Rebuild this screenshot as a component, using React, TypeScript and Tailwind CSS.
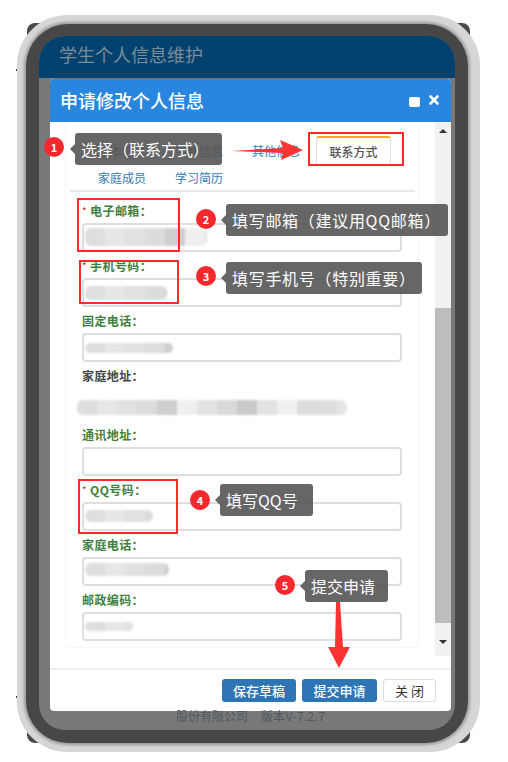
import React from 'react';
import { X } from 'lucide-react';

const font = { fontFamily: '"Noto Sans CJK SC", "Liberation Sans", sans-serif' };

const shades = ['#efefef', '#dedede', '#d9d9d9', '#e1e1e1', '#e3e3e3', '#cfcfcf', '#dcdcdc', '#e2e2e2', '#e6e6e6', '#c9c9c9', '#dcdcdc', '#f0f0f0'];

function Smudge({ width, height, left = 0, top = 0 }: { width: number; height: number; left?: number; top?: number }) {
  // mosaic over personal data in the original screenshot
  const count = Math.ceil(width / 20);
  return (
    <div
      className="absolute flex overflow-hidden rounded-[6px] blur-[1px]"
      style={{ width, height, left, top }}
    >
      {Array.from({ length: count }, (_, i) => (
        <span key={i} className="h-full w-[20px] shrink-0" style={{ background: shades[(i * 7 + 1) % shades.length] }} />
      ))}
    </div>
  );
}

function Label({ children, dark }: { children: React.ReactNode; dark?: boolean }) {
  return (
    <div className={`h-[26px] pt-[1px] flex items-center text-[12px] font-bold leading-none tracking-[0.4px] ${dark ? 'text-[#444]' : 'text-[#3f7f3f]'}`}>
      {children}
    </div>
  );
}

function Field({ label, required, value }: {
  label: string;
  required?: boolean;
  value?: { width: number; height: number; top: number };
}) {
  return (
    <div>
      <Label>
        {required && <span className="text-[#c9302c] text-[10px] font-normal mr-[3px]">*</span>}
        {label}
      </Label>
      <div className="relative h-[29px] w-[320px] bg-white border-2 border-[#dedede] rounded-[4px]">
        {value && <Smudge left={1} top={value.top} width={value.width} height={value.height} />}
      </div>
    </div>
  );
}

function Badge({ n, x, y }: { n: number; x: number; y: number }) {
  return (
    <div
      className="absolute w-5 h-5 rounded-full bg-[#f5282d] text-white text-[11px] font-bold flex items-center justify-center"
      style={{ left: x - 10, top: y - 10 }}
    >
      {n}
    </div>
  );
}

function Tip({ text, x, y, w, wide }: { text: string; x: number; y: number; w: number; wide?: boolean }) {
  return (
    <div
      className={`absolute h-[32px] bg-[#555555]/90 rounded-[3px] text-white text-[16px] flex items-center pl-[6px] whitespace-nowrap ${wide ? 'tracking-[0.7px]' : ''}`}
      style={{ left: x, top: y, width: w }}
    >
      <span className="absolute left-[-5px] top-[11px] w-0 h-0 border-y-[5px] border-y-transparent border-r-[5px] border-r-[#666666]" />
      {text}
    </div>
  );
}

function RedBox({ x, y, w, h }: { x: number; y: number; w: number; h: number }) {
  return (
    <div
      className="absolute border-[2px] border-[#ff2b2b]"
      style={{ left: x, top: y, width: w, height: h }}
    />
  );
}

export default function App() {
  return (
    <div className="relative w-[508px] h-[762px] bg-white overflow-hidden pt-[15px] pl-[17px]" style={font}>
      {/* side buttons of the phone frame */}
      <div className="absolute left-[16px] top-[69px] w-[12px] h-[2px] bg-[#3c3c3c]" />
      <div className="absolute left-[468px] top-[69px] w-[12px] h-[2px] bg-[#3c3c3c]" />
      <div className="absolute left-[16px] top-[696px] w-[12px] h-[2px] bg-[#3c3c3c]" />
      <div className="absolute left-[468px] top-[696px] w-[12px] h-[2px] bg-[#3c3c3c]" />
      <div className="absolute left-[27px] top-[23px] w-[14px] h-[14px] rounded-tl-[8px] bg-[#4a4a4a]" />
      <div className="absolute left-[456px] top-[23px] w-[14px] h-[14px] rounded-tr-[8px] bg-[#4a4a4a]" />
      <div className="absolute left-[27px] top-[730px] w-[14px] h-[13px] rounded-bl-[8px] bg-[#4a4a4a]" />
      <div className="absolute left-[456px] top-[730px] w-[14px] h-[13px] rounded-br-[8px] bg-[#4a4a4a]" />

      <div className="relative w-[463px] h-[737px] rounded-[50px] bg-[#d6d6d6] pt-[9px] pb-[9px] pl-[9px] pr-[12px]">
        <div className="h-full rounded-[42px] bg-[#474747] shadow-[0_0_3px_2px_#9a9a9a] pt-[12px] pb-[13px] px-[13px]">
          <div className="h-full rounded-[26px] overflow-hidden bg-[#787878] flex flex-col">
            <div className="h-[42px] shrink-0 bg-[#03426f] px-[20px] pb-[6px] flex items-center text-[18px] text-[#7a8c99]">
              学生个人信息维护
            </div>

            {/* modal */}
            <div className="ml-[11px] mr-[4px] mt-px h-[632px] shrink-0 bg-white rounded-[4px] flex flex-col overflow-hidden">
              <div className="h-[43px] shrink-0 bg-[#2886de] pl-[10px] pr-[10px] flex items-center justify-between text-white">
                <span className="text-[18px] font-medium">申请修改个人信息</span>
                <div className="flex items-center gap-[7px]">
                  <span className="w-[11px] h-[10px] mt-[2px] bg-white rounded-[2px]" />
                  <X size={14} strokeWidth={4.5} className="-mt-[2px]" />
                </div>
              </div>

              <div className="h-[534px] shrink-0 flex">
                <div className="w-[385px] pl-[15px] pr-[16px]">
                  <div className="h-[526px] border border-t-0 border-[#f6f6f6] rounded-b-[4px] pl-[16px]">
                    <div className="-ml-[12px] w-[345px] h-[70px] border-b-2 border-[#e8e8e8] pt-[14px] text-[12px] text-[#337ab7]">
                      <div className="h-[29px] flex items-center relative">
                        <span className="ml-[28px] w-[77px]">基本信息</span>
                        <span className="w-[77px]">学籍信息</span>
                        <span className="w-[64px]">其他信息</span>
                        <div className="w-[75px] h-[29px] bg-white border border-b-0 border-[#ddd] border-t-2 border-t-[#f5a623] rounded-t-[3px] flex items-center justify-center font-medium text-[#555]">
                          联系方式
                        </div>
                      </div>
                      <div className="flex pt-[4px] pl-[28px] gap-[29px]">
                        <span>家庭成员</span>
                        <span>学习简历</span>
                      </div>
                    </div>

                    <div className="pt-[5px]">
                      <Field label="电子邮箱：" required value={{ width: 122, height: 18, top: 3 }} />
                      <Field label="手机号码：" required value={{ width: 82, height: 14, top: 6 }} />
                      <Field label="固定电话：" value={{ width: 88, height: 10, top: 8 }} />
                      <Label dark>家庭地址：</Label>
                      <div className="relative h-[33px]">
                        <Smudge left={-5} top={12} width={270} height={15} />
                      </div>
                      <Field label="通讯地址：" />
                      <Field label="QQ号码：" required value={{ width: 68, height: 12, top: 6 }} />
                      <Field label="家庭电话：" value={{ width: 84, height: 13, top: 4 }} />
                      <Field label="邮政编码：" value={{ width: 48, height: 9, top: 8 }} />
                    </div>
                  </div>
                </div>

                {/* scrollbar */}
                <div className="w-[16px] bg-[#f1f1f1] flex flex-col items-center">
                  <div className="h-[186px] w-full flex justify-center pt-[7px]">
                    <span className="w-0 h-0 border-x-[4px] border-x-transparent border-b-[4px] border-b-[#333]" />
                  </div>
                  <div className="h-[315px] w-full bg-[#bdbdbd]" />
                  <div className="flex-1 w-full flex justify-center items-center pt-[4px]">
                    <span className="w-0 h-0 border-x-[4px] border-x-transparent border-t-[4px] border-t-[#333]" />
                  </div>
                </div>
              </div>

              <div className="mt-[12px] flex-1 border-t-2 border-[#eeeeee] flex justify-end pt-[9px] pr-[15px] gap-[6px] text-[13px]">
                <button className="w-[74px] h-[23px] bg-[#2e75b5] rounded-[3px] text-white font-medium">保存草稿</button>
                <button className="w-[75px] h-[23px] bg-[#2e75b5] rounded-[3px] text-white font-medium">提交申请</button>
                <button className="w-[53px] h-[23px] bg-white border border-[#ddd] rounded-[3px] text-[#333]">关 闭</button>
              </div>
            </div>

            <div className="flex gap-[13px] pl-[137px] -mt-[3px] pt-px text-[12px] text-[#4f5861] leading-[14px]">
              <span>股份有限公司</span>
              <span className="tracking-[0.3px]">版本V-7.2.7</span>
            </div>
          </div>
        </div>
      </div>

      {/* tutorial annotations on top of the screenshot */}
      <RedBox x={308} y={132} w={96} h={34} />
      <RedBox x={77} y={198} w={103} h={54} />
      <RedBox x={79} y={260} w={100} h={44} />
      <RedBox x={78} y={479} w={100} h={55} />

      <Badge n={1} x={54} y={147} />
      <Tip text="选择（联系方式）" x={75} y={133} w={147} />
      <Badge n={2} x={206} y={219} />
      <Tip text="填写邮箱（建议用QQ邮箱）" x={226} y={204} w={222} wide />
      <Badge n={3} x={206} y={276} />
      <Tip text="填写手机号（特别重要）" x={226} y={262} w={196} wide />
      <Badge n={4} x={200} y={500} />
      <Tip text="填写QQ号" x={220} y={484} w={93} />
      <Badge n={5} x={285} y={585} />
      <Tip text="提交申请" x={305} y={570} w={83} />

      <svg className="absolute left-0 top-0" width="508" height="762" fill="#ff3333">
        <polygon points="232,151 283,148 280,140 303,150 281,160 283,153" />
        <polygon points="336,602 340,602 343,647 350,647 339,668 328,647 335,647" />
      </svg>
    </div>
  );
}
